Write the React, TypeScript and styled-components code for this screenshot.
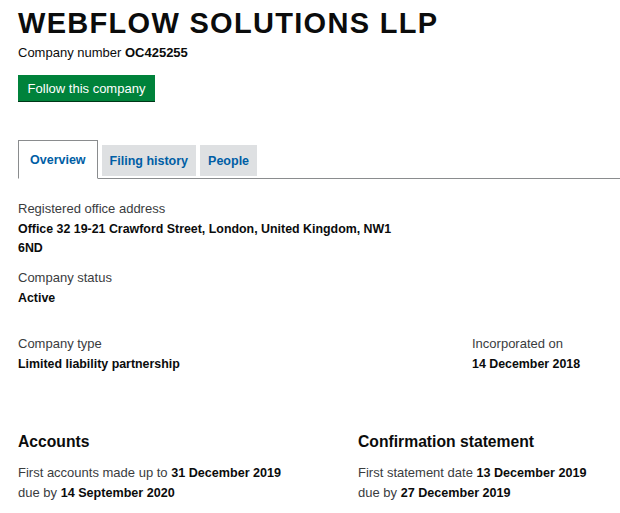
import styled, { createGlobalStyle } from 'styled-components';

const GlobalStyle = createGlobalStyle`
    html, body {
        margin: 0;
        padding: 0;
        background: #ffffff;
    }
    body {
        font-family: "Liberation Sans", Arial, sans-serif;
        color: #0b0c0c;
        -webkit-font-smoothing: antialiased;
    }
    * { box-sizing: border-box; }
`;

const Page = styled.main`
    width: 620px;
    padding: 8px 0 0 18px;
    overflow: hidden;
`;

const Title = styled.h1`
    margin: 0;
    font-size: 29px;
    line-height: 30px;
    font-weight: 700;
    letter-spacing: 1.3px;
    white-space: nowrap;
`;

const CompanyNumber = styled.p`
    margin: 6px 0 0;
    font-size: 13px;
    line-height: 18px;
    color: #0b0c0c;
    strong { font-weight: 700; }
`;

const FollowButton = styled.a`
    display: inline-flex;
    align-items: center;
    justify-content: center;
    margin-top: 13px;
    width: 137px;
    height: 26px;
    background: #00823b;
    color: #ffffff;
    font-size: 13px;
    text-decoration: none;
    box-shadow: 0 1px 0 #003618;
`;

const TabList = styled.nav`
    display: flex;
    align-items: flex-end;
    gap: 4px;
    margin-top: 39px;
    border-bottom: 1px solid #8a8c8e;
`;

const Tab = styled.a<{ $active?: boolean }>`
    display: flex;
    align-items: center;
    justify-content: center;
    font-size: 12.5px;
    font-weight: 700;
    color: #005ea5;
    text-decoration: none;
    ${p => p.$active ? `
        height: 39px;
        padding: 0 11px;
        margin-bottom: -1px;
        background: #ffffff;
        border: 1px solid #8a8c8e;
        border-bottom: 1px solid #ffffff;
    ` : `
        height: 31px;
        padding: 0 8px;
        margin-bottom: 2px;
        background: #dee0e2;
    `}
`;

const Overview = styled.section`
    padding-top: 20px;
`;

const Field = styled.div<{ $gap?: number }>`
    margin-bottom: ${p => p.$gap ?? 10}px;
`;

const Label = styled.div`
    font-size: 13px;
    line-height: 19px;
    color: #3a3c3e;
`;

const Value = styled.div<{ $width?: number }>`
    margin-top: 2px;
    font-size: 12.4px;
    line-height: 19px;
    font-weight: 700;
    color: #0b0c0c;
    max-width: ${p => p.$width ? `${p.$width}px` : 'none'};
`;

const TypeRow = styled.div`
    display: grid;
    grid-template-columns: 454px 1fr;
    margin-top: 26px;
`;

const Summary = styled.div`
    display: grid;
    grid-template-columns: 340px 1fr;
    margin-top: 57px;
`;

const SummaryTitle = styled.h2`
    margin: 0 0 10px;
    font-size: 15.7px;
    line-height: 22px;
    font-weight: 700;
`;

const SummaryText = styled.p`
    margin: 0;
    font-size: 13px;
    line-height: 19px;
    color: #3a3c3e;
    strong { color: #0b0c0c; font-weight: 700; font-size: 12.6px; }
`;

export default function App() {
    return (
        <Page>
            <GlobalStyle />
            <Title>WEBFLOW SOLUTIONS LLP</Title>
            <CompanyNumber>
                Company number <strong>OC425255</strong>
            </CompanyNumber>
            <FollowButton href="#">Follow this company</FollowButton>

            <TabList>
                <Tab $active href="#">Overview</Tab>
                <Tab href="#">Filing history</Tab>
                <Tab href="#">People</Tab>
            </TabList>

            <Overview>
                <Field>
                    <Label>Registered office address</Label>
                    <Value $width={380}>
                        Office 32 19-21 Crawford Street, London, United Kingdom, NW1 6ND
                    </Value>
                </Field>
                <Field $gap={0}>
                    <Label>Company status</Label>
                    <Value>Active</Value>
                </Field>

                <TypeRow>
                    <div>
                        <Label>Company type</Label>
                        <Value>Limited liability partnership</Value>
                    </div>
                    <div>
                        <Label>Incorporated on</Label>
                        <Value>14 December 2018</Value>
                    </div>
                </TypeRow>

                <Summary>
                    <div>
                        <SummaryTitle>Accounts</SummaryTitle>
                        <SummaryText>
                            First accounts made up to <strong>31 December 2019</strong>
                            <br />
                            due by <strong>14 September 2020</strong>
                        </SummaryText>
                    </div>
                    <div>
                        <SummaryTitle>Confirmation statement</SummaryTitle>
                        <SummaryText>
                            First statement date <strong>13 December 2019</strong>
                            <br />
                            due by <strong>27 December 2019</strong>
                        </SummaryText>
                    </div>
                </Summary>
            </Overview>
        </Page>
    );
}
